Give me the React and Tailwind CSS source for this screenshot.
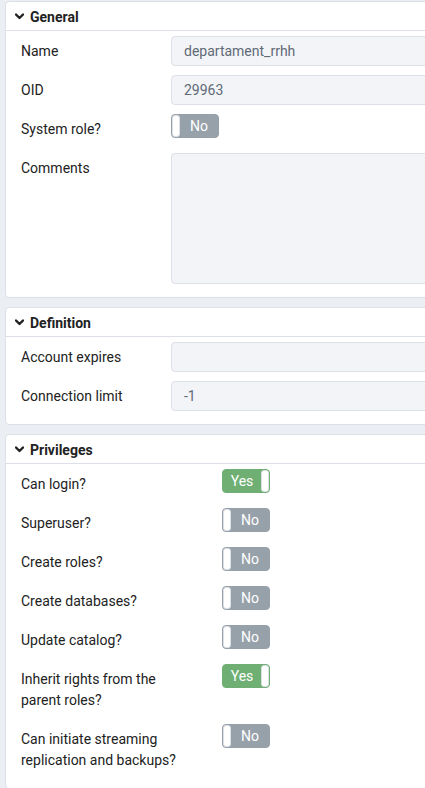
import React from "react";

const font = { fontFamily: "Roboto, 'Liberation Sans', sans-serif" };

function Chevron() {
  return (
    <svg width="9" height="7" viewBox="0 0 9 7" className="mr-[6px] shrink-0">
      <polyline points="1,1.5 4.5,5 8,1.5" fill="none" stroke="#222222" strokeWidth="2.4" strokeLinecap="round" strokeLinejoin="round" />
    </svg>
  );
}

function Card({ title, children, className = "" }) {
  return (
    <div className={"w-[470px] bg-white border border-[#dde0e6] rounded-[4px] " + className}>
      <div className="h-[27px] pt-[1px] border-b border-[#dde0e6] flex items-center pl-[9px] box-content">
        <Chevron />
        <span className="text-[14px] font-bold text-[#222222] leading-none">{title}</span>
      </div>
      <div className="pt-[5px] pb-[4px] pl-[15px]">{children}</div>
    </div>
  );
}

function Row({ label, labelW = 150, children }) {
  return (
    <div className="flex items-start mb-[9px] min-h-[30px]">
      <div
        className={"shrink-0 pt-[5px] pb-[4px] text-[14px] leading-[21px] text-[#222222] " + (labelW === 150 ? "w-[150px]" : "w-[201px] pr-[30px]")}
      >
        {label}
      </div>
      <div className="flex-1">{children}</div>
    </div>
  );
}

function Input({ value, tall }) {
  return (
    <div
      className={
        "w-full rounded-[4px] border border-[#dde0e6] bg-[#f3f4f7] pl-[12px] text-[14px] text-[#5f6a76] flex " +
        (tall ? "h-[131px] items-start" : "h-[30px] items-center")
      }
    >
      {value}
    </div>
  );
}

function Toggle({ on }) {
  if (on) {
    return (
      <div className="w-[48px] h-[24px] rounded-[4px] bg-[#6faf74] border border-[#6faf74] flex items-stretch">
        <div className="flex-1 flex items-center justify-center text-white text-[14px] leading-none pb-[1px]">Yes</div>
        <div className="w-[8px] bg-white rounded-[3px] border border-[#dde0e6]" />
      </div>
    );
  }
  return (
    <div className="w-[48px] h-[24px] rounded-[4px] bg-[#97a1aa] border border-[#97a1aa] flex items-stretch">
      <div className="w-[8px] bg-white rounded-[3px] border border-[#dde0e6]" />
      <div className="flex-1 flex items-center justify-center text-white text-[14px] leading-none pb-[1px]">No</div>
    </div>
  );
}

export default function App() {
  return (
    <div className="w-[425px] h-[788px] overflow-hidden bg-[#ebeef3] pt-[1px] pl-[5px]" style={font}>
      <Card title="General">
        <Row label="Name"><Input value="departament_rrhh" /></Row>
        <Row label="OID"><Input value="29963" /></Row>
        <Row label="System role?"><Toggle on={false} /></Row>
        <Row label="Comments"><Input value="" tall /></Row>
      </Card>
      <Card title="Definition" className="mt-[9px]">
        <Row label="Account expires"><Input value="" /></Row>
        <Row label="Connection limit"><Input value="-1" /></Row>
      </Card>
      <Card title="Privileges" className="mt-[9px]">
        <Row labelW={201} label="Can login?"><Toggle on /></Row>
        <Row labelW={201} label="Superuser?"><Toggle on={false} /></Row>
        <Row labelW={201} label="Create roles?"><Toggle on={false} /></Row>
        <Row labelW={201} label="Create databases?"><Toggle on={false} /></Row>
        <Row labelW={201} label="Update catalog?"><Toggle on={false} /></Row>
        <Row labelW={201} label="Inherit rights from the parent roles?"><Toggle on /></Row>
        <Row labelW={201} label="Can initiate streaming replication and backups?"><Toggle on={false} /></Row>
      </Card>
    </div>
  );
}
